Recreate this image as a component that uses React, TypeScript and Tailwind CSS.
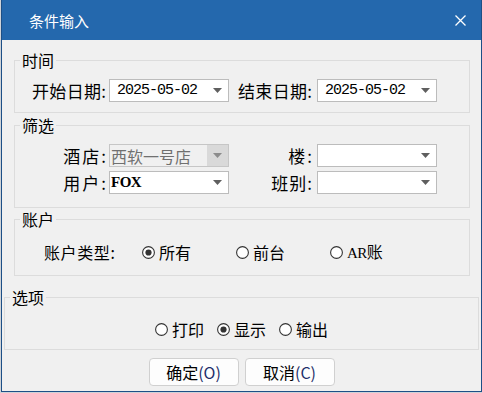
import React from "react";

const Arrow = ({ c = "#5f5f5f" }: { c?: string }) => (
  <svg width="9" height="5" viewBox="0 0 9 5">
    <path d="M0 0H9L4.5 5Z" fill={c} />
  </svg>
);

function Combo({ text, bold = false }: { text?: string; bold?: boolean }) {
  return (
    <div className="flex h-[23px] w-[120px] border border-[#bcbcbc] bg-white">
      <div
        className={
          "flex flex-1 items-center leading-none text-black " +
          (bold
            ? "pl-[1px] font-['Liberation_Serif',serif] text-[15px] font-bold tracking-[-0.5px]"
            : "pl-[7px] font-['Liberation_Mono',monospace] text-[15px] tracking-[-1px]")
        }
      >
        {text}
      </div>
      <div className="flex w-[21px] items-center justify-center">
        <Arrow />
      </div>
    </div>
  );
}

function DisabledCombo() {
  return (
    <div className="flex h-[23px] w-[120px] border border-[#c6c6c6] bg-[#f0f0f0]">
      <div className="flex flex-1 items-center pl-[1px] text-[16px] leading-none text-[#707070]">西软一号店</div>
      <div className="flex w-[21px] items-center justify-center bg-[#d9d9d9]">
        <Arrow c="#8c8c8c" />
      </div>
    </div>
  );
}

function Radio({ on }: { on?: boolean }) {
  return (
    <svg width="13" height="13" viewBox="0 0 13 13" className="shrink-0">
      <circle cx="6.5" cy="6.5" r="5.9" fill="#ffffff" stroke="#333333" strokeWidth="1.1" />
      {on && <circle cx="6.5" cy="6.5" r="3.1" fill="#333333" />}
    </svg>
  );
}

function Label({ w, pr, track, text }: { w: string; pr: string; track: string; text: string }) {
  return (
    <div className={"flex justify-end text-[17px] leading-none text-black " + w + " " + pr}>
      <span className={track}>{text}</span>
      <span>:</span>
    </div>
  );
}

export default function App() {
  return (
    <div className="h-[393px] w-[482px] overflow-hidden bg-[#cfd3d8] font-['Noto_Sans_CJK_SC',sans-serif]">
      <div className="ml-[1px] flex h-[392px] w-[481px] flex-col border-x border-b border-[#1d4f86] bg-[#f0f0f0]">
        {/* title bar */}
        <div className="flex h-[40px] items-center justify-between bg-[#2468ad] pl-[27px] pr-[15px]">
          <span className="text-[15px] leading-none text-white">条件输入</span>
          <svg width="11" height="11" viewBox="0 0 11 11">
            <path d="M0.5 0.5L10.5 10.5M10.5 0.5L0.5 10.5" stroke="#ffffff" strokeWidth="1.3" />
          </svg>
        </div>

        <div className="flex flex-col pt-[12px]">
          {/* 时间 */}
          <fieldset className="ml-[12px] w-[456px] border border-[#dcdcdc] px-0 pb-[10px]">
            <legend className="ml-[5px] px-[2px] text-[16px] leading-[16px] text-black">时间</legend>
            <div className="mt-[11px] flex h-[23px] items-center">
              <Label w="w-[94px]" pr="pr-[3px]" track="tracking-[0.3px]" text="开始日期" />
              <Combo text="2025-05-02" />
              <Label w="w-[88px]" pr="pr-[5px]" track="tracking-[0.3px]" text="结束日期" />
              <Combo text="2025-05-02" />
            </div>
          </fieldset>

          {/* 筛选 */}
          <fieldset className="ml-[12px] mt-[4px] w-[456px] border border-[#dcdcdc] px-0 pb-[13px]">
            <legend className="ml-[5px] px-[2px] text-[16px] leading-[16px] text-black">筛选</legend>
            <div className="mt-[11px] flex h-[23px] items-center">
              <Label w="w-[94px]" pr="pr-[3px]" track="tracking-[2px]" text="酒店" />
              <DisabledCombo />
              <Label w="w-[88px]" pr="pr-[5px]" track="tracking-[2px]" text="楼" />
              <Combo />
            </div>
            <div className="mt-[4px] flex h-[23px] items-center">
              <Label w="w-[94px]" pr="pr-[3px]" track="tracking-[2px]" text="用户" />
              <Combo text="FOX" bold />
              <Label w="w-[88px]" pr="pr-[5px]" track="tracking-[1px]" text="班别" />
              <Combo />
            </div>
          </fieldset>

          {/* 账户 */}
          <fieldset className="ml-[12px] mt-[3px] w-[456px] border border-[#dcdcdc] px-0 pb-[15px]">
            <legend className="ml-[5px] px-[2px] text-[16px] leading-[16px] text-black">账户</legend>
            <div className="mt-[17px] flex h-[16px] items-center pl-[29px] text-[16px] leading-none text-black">
              <div className="w-[98px] tracking-[0.6px]">账户类型:</div>
              <div className="flex w-[94px] items-center gap-[4px]">
                <Radio on />
                <span>所有</span>
              </div>
              <div className="flex w-[94px] items-center gap-[4px]">
                <Radio />
                <span>前台</span>
              </div>
              <div className="flex items-center gap-[4px]">
                <Radio />
                <span>
                  <span className="font-['Liberation_Serif',serif] text-[15px] tracking-[-0.5px]">AR</span>账
                </span>
              </div>
            </div>
          </fieldset>

          {/* 选项 */}
          <fieldset className="ml-[2px] mt-[13px] w-[475px] border border-[#dcdcdc] px-0 pb-[12px]">
            <legend className="ml-[5px] px-[2px] text-[16px] leading-[16px] text-black">选项</legend>
            <div className="mt-[16px] flex h-[16px] items-center justify-center text-[16px] leading-none text-black">
              <div className="flex items-center gap-[4px]">
                <Radio />
                <span>打印</span>
              </div>
              <div className="ml-[13px] flex items-center gap-[4px]">
                <Radio on />
                <span>显示</span>
              </div>
              <div className="ml-[13px] flex items-center gap-[4px]">
                <Radio />
                <span>输出</span>
              </div>
            </div>
          </fieldset>

          {/* buttons */}
          <div className="mt-[8px] flex justify-center gap-[6px]">
            <button className="flex h-[28px] w-[90px] items-center justify-center rounded-[4px] border border-[#d0d0d0] bg-[#fdfdfd] text-[16px] leading-none text-black">
              确定<span className="text-[#1e2f6a]">(O)</span>
            </button>
            <button className="flex h-[28px] w-[90px] items-center justify-center rounded-[4px] border border-[#d0d0d0] bg-[#fdfdfd] text-[16px] leading-none text-black">
              取消<span className="text-[#1e2f6a]">(C)</span>
            </button>
          </div>
        </div>
      </div>
    </div>
  );
}
